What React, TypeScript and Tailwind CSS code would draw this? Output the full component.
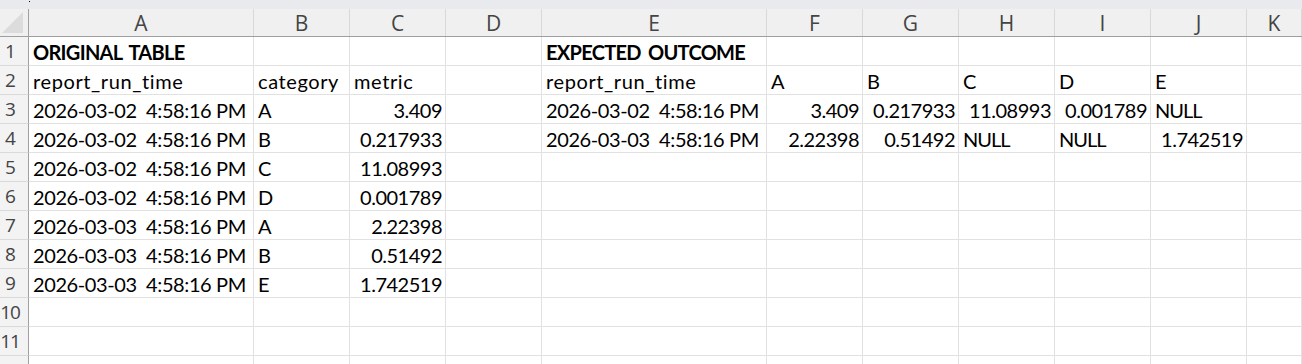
import React from "react";

type Kind = "lc" | "cap" | "num" | "date" | "bold" | "none";
type Cell = { v: string; k: Kind };

const COLS = ["A", "B", "C", "D", "E", "F", "G", "H", "I", "J", "K"];
const WIDTHS = ["w-[225px]", "w-[96px]", "w-[96px]", "w-[96px]", "w-[225px]", "w-[96px]", "w-[96px]", "w-[96px]", "w-[96px]", "w-[96px]", "flex-1"];

const lc = (v: string): Cell => ({ v, k: "lc" });
const cap = (v: string): Cell => ({ v, k: "cap" });
const n = (v: string): Cell => ({ v, k: "num" });
const d = (v: string): Cell => ({ v, k: "date" });
const b = (v: string): Cell => ({ v, k: "bold" });
const e: Cell = { v: "", k: "none" };

const D2 = "2026-03-02  4:58:16 PM";
const D3 = "2026-03-03  4:58:16 PM";

const ROWS: Cell[][] = [
  [b("ORIGINAL TABLE"), e, e, e, b("EXPECTED OUTCOME"), e, e, e, e, e, e],
  [lc("report_run_time"), lc("category"), lc("metric"), e, lc("report_run_time"), cap("A"), cap("B"), cap("C"), cap("D"), cap("E"), e],
  [d(D2), cap("A"), n("3.409"), e, d(D2), n("3.409"), n("0.217933"), n("11.08993"), n("0.001789"), cap("NULL"), e],
  [d(D2), cap("B"), n("0.217933"), e, d(D3), n("2.22398"), n("0.51492"), cap("NULL"), cap("NULL"), n("1.742519"), e],
  [d(D2), cap("C"), n("11.08993"), e, e, e, e, e, e, e, e],
  [d(D2), cap("D"), n("0.001789"), e, e, e, e, e, e, e, e],
  [d(D3), cap("A"), n("2.22398"), e, e, e, e, e, e, e, e],
  [d(D3), cap("B"), n("0.51492"), e, e, e, e, e, e, e, e],
  [d(D3), cap("E"), n("1.742519"), e, e, e, e, e, e, e, e],
  [e, e, e, e, e, e, e, e, e, e, e],
  [e, e, e, e, e, e, e, e, e, e, e],
  [e, e, e, e, e, e, e, e, e, e, e],
];

const KIND_CLS: Record<Kind, string> = {
  lc: "justify-start pl-[4px] tracking-[0.6px]",
  cap: "justify-start pl-[4px] tracking-[-1px]",
  num: "justify-end pr-[3px] tracking-[-0.5px]",
  date: "justify-start pl-[4px] tracking-[-0.4px]",
  bold: "justify-start pl-[4px] tracking-[-0.7px] [word-spacing:3px] font-bold",
  none: "",
};

const HDR_FONT = "font-['Open_Sans',sans-serif]";
const CELL_FONT = "font-['Lato','Liberation_Sans',sans-serif]";

// Only the first eleven rows are fully on screen; the twelfth peeks in at the bottom.
const VISIBLE_LABELS = 11;

export default function App() {
  return (
    <div className="w-[1302px] h-[364px] overflow-hidden bg-white">
      {/* window strip above the column headers */}
      <div className="h-[9px] bg-[#e8eaed]">
        <div className="ml-[29px] pt-[1px]">
          <div className="w-px h-px bg-black" />
        </div>
      </div>

      {/* column header row */}
      <div className="flex h-[28px] bg-[#f0f0f0] border-b border-[#9e9e9e]">
        <div className="w-[29px] shrink-0 border-r border-[#a0a0a0] flex items-end justify-center pb-[2px]">
          <svg width="21" height="21" viewBox="0 0 21 21" className="mr-[4px] mb-[1px]">
            <polygon points="21,0 21,21 0,21" fill="#dcdcdc" />
          </svg>
        </div>
        {COLS.map((c, i) => (
          <div
            key={c}
            className={`${WIDTHS[i]} shrink-0 border-r border-[#d9d9d9] flex items-center justify-center ${HDR_FONT} text-[21px] text-[#444] leading-none pt-[2px]`}
          >
            {c}
          </div>
        ))}
      </div>

      {/* sheet body */}
      {ROWS.map((row, r) => (
        <div key={r} className="flex h-[29px]">
          <div
            className={`w-[29px] shrink-0 bg-[#f3f3f3] border-r border-[#a0a0a0] border-b border-b-[#dadada] flex items-center justify-center pr-[8px] pt-[1px] ${HDR_FONT} text-[19px] tracking-[-1px] text-[#444] leading-none`}
          >
            {r < VISIBLE_LABELS ? r + 1 : ""}
          </div>
          {row.map((cell, i) => (
            <div
              key={i}
              className={`${WIDTHS[i]} shrink-0 border-r border-b border-[#e1e1e1] flex items-end pb-[3px] ${KIND_CLS[cell.k]} ${CELL_FONT} text-[20px] text-black leading-none whitespace-pre`}
            >
              {cell.v}
            </div>
          ))}
        </div>
      ))}
    </div>
  );
}
